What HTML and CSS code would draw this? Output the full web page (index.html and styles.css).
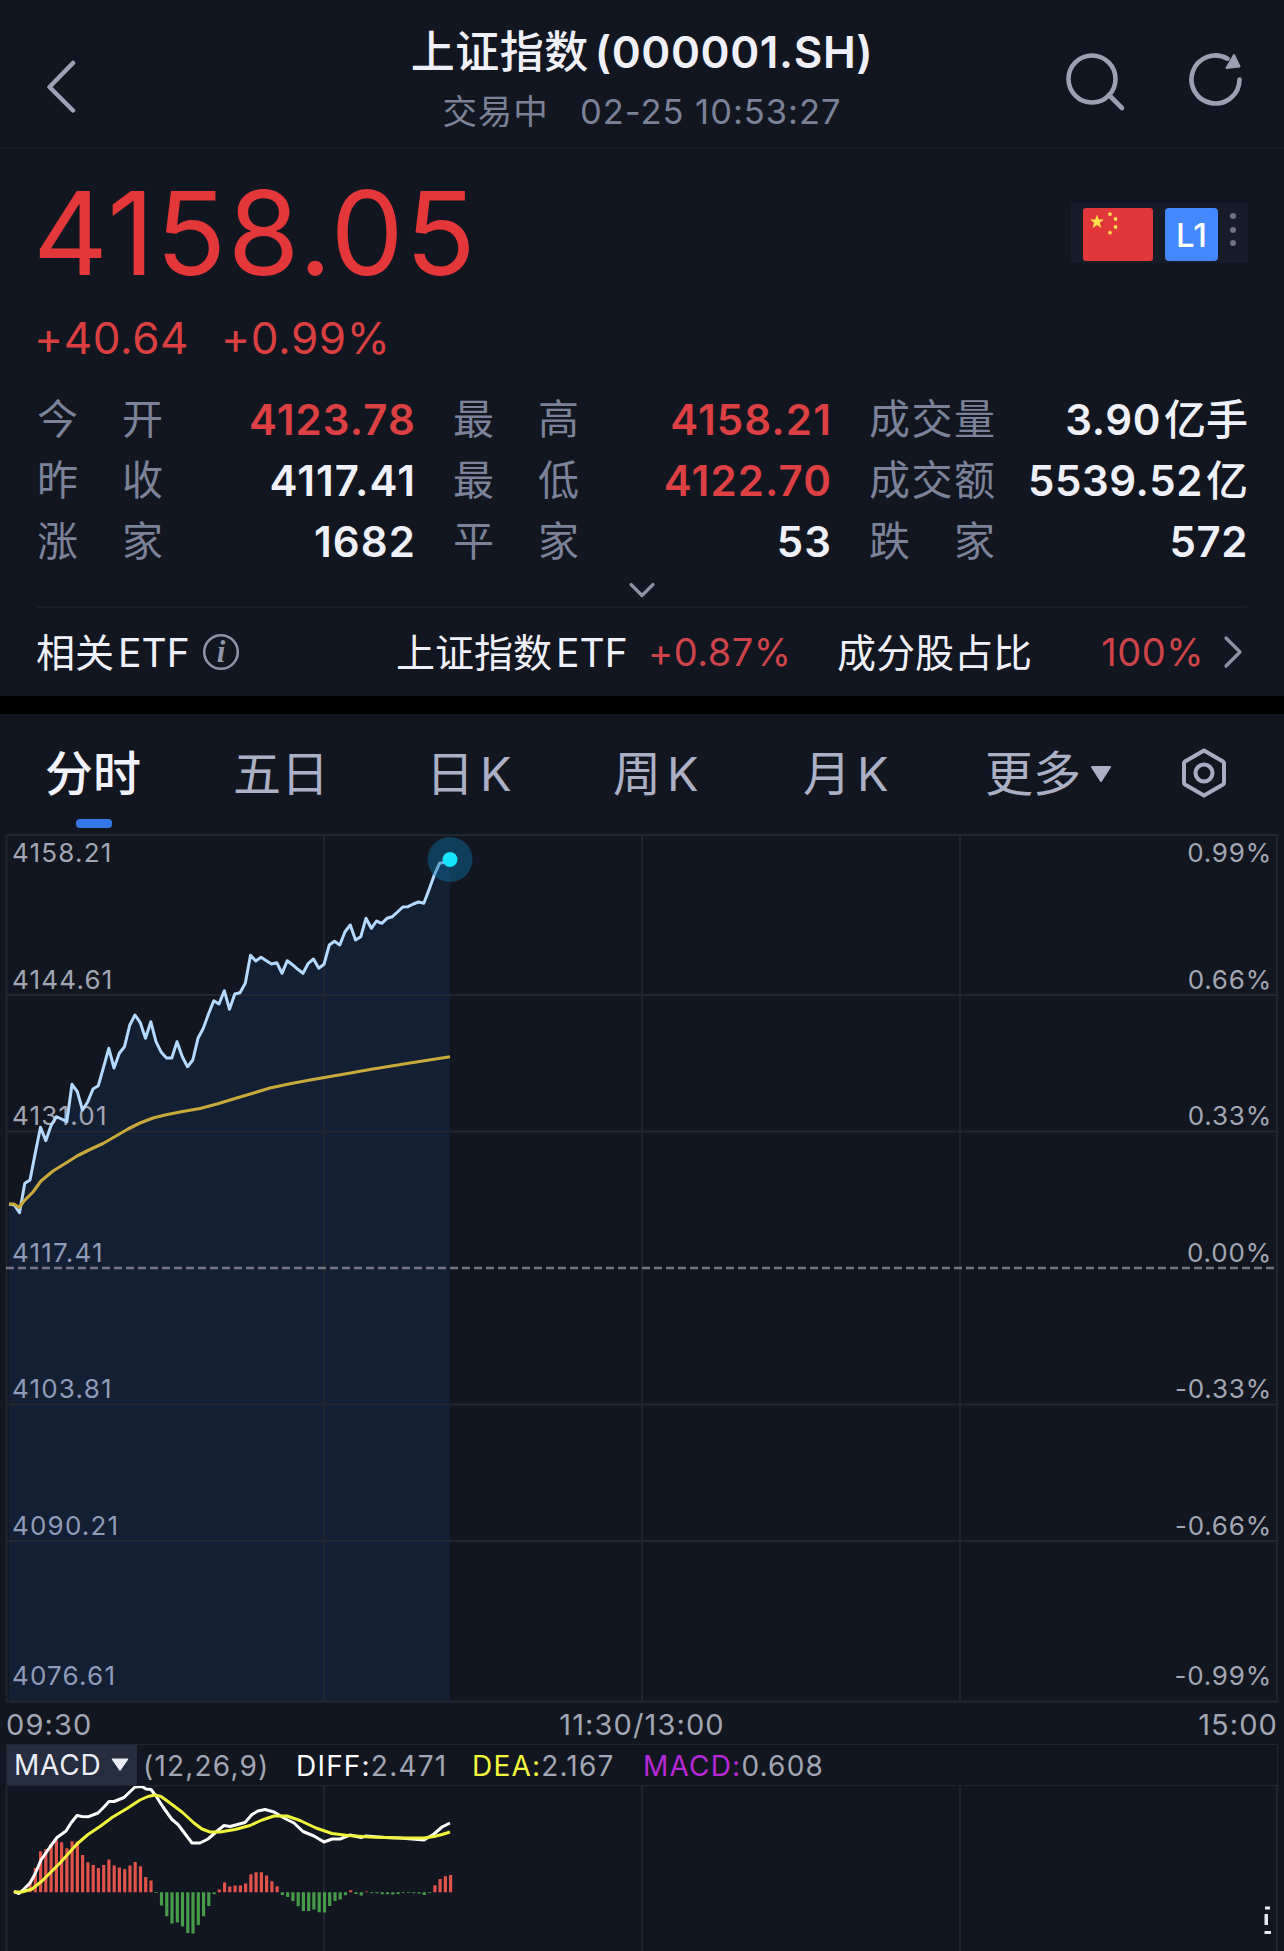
FILE: index.html
```html
<!DOCTYPE html>
<html lang="zh-CN">
<head>
    <meta charset="UTF-8">
    <meta name="viewport" content="width=device-width, initial-scale=1.0">
    <title>上证指数</title>
    <link rel="stylesheet" href="styles.css">
</head>
<body>
    <header class="header">
        <svg class="back" width="32" height="54" viewBox="0 0 32 54"><path d="M27 3L3.500 27L27 50.500"/></svg>
        <div class="title-box">
            <h1 class="title">上证指数<span class="code">(000001.SH)</span></h1>
            <p class="subtitle"><span class="status">交易中</span><span>02-25 10:53:27</span></p>
        </div>
        <div class="header-icons">
            <svg width="62" height="60" viewBox="0 0 62 60"><circle cx="27" cy="27" r="23.500"/><path d="M44 43L57 56"/></svg>
            <svg width="54" height="56" viewBox="0 0 54 56"><path d="M50.500 27.500A24 24 0 1 1 38.500 6.700"/><path class="solid" d="M45 3L50.500 14.500L37.500 16Z"/></svg>
        </div>
    </header>

    <section class="quote">
        <div class="price-row">
            <div class="price">4158.05</div>
            <div class="badges">
                <svg class="flag" width="70" height="53" viewBox="0 0 70 53">
                    <rect width="70" height="53" rx="3"/>
                    <path d="M14 6.500L15.800 11.500H21L16.800 14.700L18.300 20L14 16.900L9.500 20L11.100 14.700L7 11.500H12.200Z"/>
                    <path d="M27 3.500l.8 1.500 1.800.3-1.200 1.200.2 1.700-1.600-.8-1.700.8.300-1.700-1.200-1.200 1.700-.3zM27 22l.8 1.500 1.800.3-1.200 1.200.2 1.700-1.600-.8-1.700.8.300-1.700-1.200-1.200 1.700-.3z"/>
                    <circle cx="32.500" cy="11" r="1.900"/>
                    <circle cx="32.500" cy="19" r="1.900"/>
                </svg>
                <span class="level">L1</span>
                <span class="dots"><i></i><i></i><i></i></span>
            </div>
        </div>
        <div class="change"><span>+40.64</span><span>+0.99%</span></div>

        <div class="stats">
            <div class="stat"><span class="label"><b>今</b><b>开</b></span><span class="value up">4123.78</span></div>
            <div class="stat"><span class="label"><b>最</b><b>高</b></span><span class="value up">4158.21</span></div>
            <div class="stat"><span class="label"><b>成</b><b>交</b><b>量</b></span><span class="value">3.90<em>亿手</em></span></div>
            <div class="stat"><span class="label"><b>昨</b><b>收</b></span><span class="value">4117.41</span></div>
            <div class="stat"><span class="label"><b>最</b><b>低</b></span><span class="value up">4122.70</span></div>
            <div class="stat"><span class="label"><b>成</b><b>交</b><b>额</b></span><span class="value">5539.52<em>亿</em></span></div>
            <div class="stat"><span class="label"><b>涨</b><b>家</b></span><span class="value">1682</span></div>
            <div class="stat"><span class="label"><b>平</b><b>家</b></span><span class="value">53</span></div>
            <div class="stat"><span class="label"><b>跌</b><b>家</b></span><span class="value">572</span></div>
        </div>
        <div class="expand">
            <svg width="28" height="16" viewBox="0 0 28 16"><path d="M3 2.500L14 13.500L25 2.500"/></svg>
        </div>

        <div class="etf">
            <span class="etf-label">相关<span class="latin">ETF</span></span>
            <svg class="info" width="38" height="38" viewBox="0 0 38 38"><circle cx="19" cy="19" r="16.800"/><text x="19" y="29">i</text></svg>
            <span class="etf-name">上证指数<span class="latin">ETF</span></span>
            <span class="etf-pct">+0.87%</span>
            <span class="etf-share">成分股占比</span>
            <span class="etf-full">100%</span>
            <svg class="more" width="20" height="34" viewBox="0 0 20 34"><path d="M3 3L17 17L3 31"/></svg>
        </div>
    </section>

    <nav class="tabs">
        <span class="tab active">分时</span>
        <span class="tab">五日</span>
        <span class="tab">日<span class="k">K</span></span>
        <span class="tab">周<span class="k">K</span></span>
        <span class="tab">月<span class="k">K</span></span>
        <span class="tab tab-more">更多<svg width="22" height="18" viewBox="0 0 22 18"><path d="M2 2H20L11 16Z"/></svg></span>
        <svg class="setting" width="48" height="52" viewBox="0 0 48 52"><path d="M24 3.500L43 14.500Q44 15 44 16.500V35.500Q44 37 43 37.500L24 48.500L5 37.500Q4 37 4 35.500V16.500Q4 15 5 14.500Z"/><circle cx="24" cy="26" r="8.500"/></svg>
    </nav>

    <svg class="chart" width="1284" height="869" viewBox="0 0 1284 869">
        <path class="area" id="area"/>
        <path class="grid" d="M6.500 1H1277V867.500H6.500ZM6.500 161H1277M6.500 297.500H1277M6.500 570.500H1277M6.500 707H1277M324 1V868M642 1V868M960 1V868"/>
        <g class="axis left">
            <text x="12" y="28">4158.21</text>
            <text x="12" y="155">4144.61</text>
            <text x="12" y="291">4131.01</text>
            <text class="shaded" x="12" y="428">4117.41</text>
            <text class="shaded" x="12" y="564">4103.81</text>
            <text class="shaded" x="12" y="701">4090.21</text>
            <text class="shaded" x="12" y="851">4076.61</text>
        </g>
        <g class="axis right">
            <text x="1272" y="28">0.99%</text>
            <text x="1272" y="155">0.66%</text>
            <text x="1272" y="291">0.33%</text>
            <text x="1272" y="428">0.00%</text>
            <text x="1272" y="564">-0.33%</text>
            <text x="1272" y="701">-0.66%</text>
            <text x="1272" y="851">-0.99%</text>
        </g>
        <path class="base" d="M6 434H1277"/>
        <polyline class="price-line" id="priceLine"/>
        <polyline class="avg-line" id="avgLine"/>
        <circle class="halo" cx="450" cy="25.500" r="22.500"/>
        <circle class="dot" cx="450" cy="25.500" r="7.500"/>
    </svg>

    <div class="times"><span>09:30</span><span>11:30/13:00</span><span>15:00</span></div>

    <div class="macd-bar">
        <span class="picker">MACD<svg width="20" height="16" viewBox="0 0 20 16"><path d="M2 2H18L10 13.500Z"/></svg></span>
        <span class="params">(12,26,9)</span>
        <span class="item diff"><b>DIFF:</b>2.471</span>
        <span class="item dea"><b>DEA:</b>2.167</span>
        <span class="item macd"><b>MACD:</b>0.608</span>
    </div>

    <svg class="macd-chart" width="1284" height="165" viewBox="0 0 1284 165">
        <path class="grid" d="M6.500 0V165M324 0V165M642 0V165M960 0V165M1277 0V165"/>
        <path class="bar-up" id="barsUp"/>
        <path class="bar-down" id="barsDown"/>
        <polyline class="diff-line" id="diffLine"/>
        <polyline class="dea-line" id="deaLine"/>
        <path class="mark" d="M1265 120.500H1270V123.500H1265ZM1264.500 128H1268V139H1264.500ZM1264.500 145H1271V148H1264.500Z"/>
    </svg>
    <script src="chart.js"></script>
</body>
</html>
```
FILE: styles.css
```css
* {
    box-sizing: border-box;
}
body {
    margin: 0;
    width: 1284px;
    height: 1951px;
    overflow: hidden;
    background-color: #121620;
    color: #f0f1f8;
    font-family: Inter, "Noto Sans CJK SC", sans-serif;
}
svg {
    display: block;
    fill: none;
}
b, em, i {
    font-weight: inherit;
    font-style: normal;
}

/* header */
.header {
    display: grid;
    grid-template-columns: 400px 1fr 400px;
    height: 149px;
    border-bottom: 2px solid #191d28;
}
.back {
    margin: 60px 0 0 46px;
    stroke: #9ba2b5;
    stroke-width: 4.5;
    stroke-linecap: round;
    stroke-linejoin: round;
}
.title-box {
    display: flex;
    flex-direction: column;
    align-items: center;
    padding-top: 20px;
}
.title {
    margin: 0;
    font-size: 44px;
    line-height: 64px;
    font-weight: 500;
    letter-spacing: 0.5px;
    white-space: nowrap;
}
.code {
    margin-left: 6px;
    font-weight: 600;
    letter-spacing: 0.6px;
}
.subtitle {
    display: flex;
    gap: 31px;
    margin: 0;
    font-size: 34.5px;
    line-height: 56px;
    letter-spacing: 1px;
    color: #7b8198;
    white-space: nowrap;
}
.header-icons {
    display: flex;
    justify-content: flex-end;
    gap: 62px;
    padding: 52px 41px 0 0;
    stroke: #9ba1b3;
    stroke-width: 4.6;
    stroke-linecap: round;
    stroke-linejoin: round;
}
.header-icons .solid {
    fill: #9ba1b3;
    stroke-width: 2;
}

/* quote */
.quote {
    height: 547px;
    padding: 0 37px;
}
.price-row {
    display: flex;
    justify-content: space-between;
    height: 156px;
}
.price {
    margin: 14px 0 0 -4px;
    font-size: 116px;
    line-height: 140px;
    letter-spacing: 1.5px;
    color: #e43739;
}
.badges {
    display: flex;
    align-items: center;
    width: 177px;
    height: 60px;
    margin: 54px -1px 0 0;
    padding: 2px 0 0 12px;
    background-color: #181c28;
}
.flag rect {
    fill: #e1363a;
}
.flag path, .flag circle {
    fill: #ffdf4a;
}
.level {
    width: 53px;
    height: 53px;
    margin-left: 12px;
    border-radius: 4px;
    background-color: #4488ff;
    color: #fff;
    font-size: 33px;
    font-weight: 500;
    line-height: 55px;
    text-align: center;
}
.dots {
    display: flex;
    flex-direction: column;
    gap: 7.5px;
    margin: -9px 0 0 12px;
}
.dots i {
    width: 6px;
    height: 6px;
    border-radius: 50%;
    background-color: #70737f;
}
.change {
    display: flex;
    gap: 32px;
    height: 84px;
    margin-left: -3px;
    font-size: 44px;
    line-height: 66px;
    letter-spacing: 0.6px;
    color: #d9403f;
}
.stats {
    display: grid;
    grid-template-columns: repeat(3, 378px);
    column-gap: 38px;
    grid-auto-rows: 61px;
}
.stat {
    display: flex;
    justify-content: space-between;
    line-height: 61px;
    white-space: nowrap;
}
.label {
    display: flex;
    justify-content: space-between;
    width: 126px;
    font-size: 41px;
    color: #7b8299;
}
.value {
    margin-right: -1px;
    font-size: 42px;
    font-weight: 600;
    letter-spacing: 1.1px;
}
.stat:nth-child(3n) .value {
    letter-spacing: 0.6px;
}
.value em {
    margin-left: 3px;
    font-weight: 500;
    letter-spacing: 0;
}
.up {
    color: #dc4042;
}
.expand {
    display: flex;
    justify-content: center;
    height: 36px;
    padding-top: 10px;
    border-bottom: 2px solid #1a1e29;
}
.expand svg, .more {
    stroke: #8d93a5;
    stroke-width: 3.2;
    stroke-linecap: round;
    stroke-linejoin: round;
}
.etf {
    display: flex;
    align-items: center;
    height: 88px;
    font-size: 38px;
    white-space: nowrap;
}
.latin {
    margin-left: 4px;
}
.etf-label, .etf-name, .etf-share {
    margin-top: -4px;
    font-size: 39px;
}
.etf-label {
    width: 165px;
    margin-left: -1px;
}
.info {
    margin-left: 1px;
}
.info circle {
    stroke: #8d93a5;
    stroke-width: 2.6;
}
.info text {
    fill: #9096a8;
    font-family: "Liberation Serif", serif;
    font-size: 31px;
    font-style: italic;
    font-weight: 700;
    text-anchor: middle;
}
.etf-name {
    width: 252px;
    margin-left: 156px;
}
.etf-pct {
    width: 189px;
    letter-spacing: 0.5px;
    color: #cf4448;
}
.etf-full {
    flex: 1;
    margin-right: 19px;
    text-align: right;
    letter-spacing: 0.5px;
    color: #cf4448;
}
.more {
    margin-right: 4px;
}

/* tabs */
.tabs {
    display: flex;
    align-items: flex-start;
    height: 138px;
    padding-left: 45px;
    border-top: 18px solid #000;
    font-size: 48px;
    line-height: 120px;
    color: #abb0c6;
    white-space: nowrap;
}
.tab {
    width: 188px;
}
.tab:nth-child(2) {
    width: 193px;
}
.tab:nth-child(3) {
    width: 187px;
}
.tab:nth-child(4) {
    width: 190px;
}
.tab:nth-child(5) {
    width: 182px;
}
.k {
    margin-left: 6px;
    font-size: 47px;
}
.active {
    position: relative;
    color: #f2f3fa;
    font-weight: 500;
}
.active::after {
    content: "";
    position: absolute;
    left: 31px;
    top: 105px;
    width: 36px;
    height: 9px;
    border-radius: 4px;
    background-color: #3577e6;
}
.tab.tab-more {
    display: flex;
    align-items: center;
    gap: 9px;
    width: 195px;
}
.tab-more svg {
    fill: #abb0c6;
    stroke: #abb0c6;
    stroke-width: 2;
    stroke-linejoin: round;
}
.setting {
    margin-top: 33px;
    stroke: #a6acc2;
    stroke-width: 4;
    stroke-linejoin: round;
}

/* time chart */
.grid {
    stroke: #222631;
    stroke-width: 1.8;
}
.axis {
    fill: #a2a6b4;
    font-size: 26px;
}
.left {
    letter-spacing: 1.2px;
}
.right {
    letter-spacing: 0.8px;
    text-anchor: end;
}
.axis .shaded {
    fill: #8f9cb8;
}
.base {
    stroke: #747783;
    stroke-width: 2.6;
    stroke-dasharray: 8 4;
}
.area {
    fill: rgba(26, 70, 128, 0.2);
}
.price-line {
    stroke: #b4daff;
    stroke-width: 3;
    stroke-linejoin: round;
}
.avg-line {
    stroke: #c9a93c;
    stroke-width: 3.1;
    stroke-linejoin: round;
}
.halo {
    fill: rgba(13, 110, 165, 0.45);
}
.dot {
    fill: #16e4fa;
}
.times {
    display: grid;
    grid-template-columns: 1fr 1fr 1fr;
    height: 41px;
    padding: 0 6px;
    font-size: 29px;
    line-height: 44px;
    letter-spacing: 1.1px;
    color: #a2a6b4;
}
.times span:nth-child(2) {
    text-align: center;
}
.times span:nth-child(3) {
    text-align: right;
}

/* macd */
.macd-bar {
    display: flex;
    height: 42px;
    margin: 0 6px;
    border: 1px solid #222631;
    font-size: 28px;
    line-height: 42px;
    letter-spacing: 1.2px;
    color: #a2a6b4;
    white-space: nowrap;
}
.picker {
    display: flex;
    align-items: center;
    justify-content: space-between;
    width: 130px;
    padding: 0 7px;
    background-color: #262d40;
    color: #eceef6;
    letter-spacing: 0.8px;
}
.picker svg {
    fill: #eceef6;
    stroke: #eceef6;
    stroke-linejoin: round;
}
.params {
    width: 159px;
    padding-left: 6px;
}
.diff {
    width: 176px;
}
.dea {
    width: 171px;
}
.diff b {
    color: #fff;
}
.dea b {
    color: #f4f83c;
}
.macd b {
    color: #b728d8;
}
.bar-up, .bar-down {
    stroke: #e0524a;
    stroke-width: 3.2;
}
.bar-down {
    stroke: #479c49;
}
.diff-line, .dea-line {
    stroke: #fff;
    stroke-width: 3;
    stroke-linejoin: round;
}
.dea-line {
    stroke: #f0f43a;
}
.mark {
    fill: #e8e9ee;
}
```
FILE: chart.js
```js
// one value per minute from 09:30, in px from the top of the chart
const price = [370, 371, 378.7, 349.3, 346, 319, 293.3, 306.7, 291.7, 282.7, 285, 287.7, 250.3, 257.7, 276, 267.7, 255, 251.7,
    233.3, 214.3, 234, 219.3, 212.7, 191, 181, 188.7, 204.3, 187.7, 207.7, 218.3, 224, 224, 207.7, 222.7, 232.7, 226, 204.3, 194.3,
    180, 166.7, 170, 156.7, 175.3, 160, 158.7, 149.3, 121.3, 127, 123.3, 126.7, 130, 128.7, 139.3, 126.7, 130.7, 135.3, 139.3,
    129.3, 125, 134.3, 130.3, 111, 107.3, 111, 97.7, 91, 106, 102.7, 84.3, 94.3, 87, 89.3, 84.3, 82.7, 78, 73, 72.7, 70, 68,
    69.3, 55.7, 41, 29.3, 28.3, 25.5];

const avg = [[9, 370], [14, 370], [19, 373.5], [24, 367], [33, 358], [41, 347], [53, 337], [66, 329], [77, 322], [90, 315.500],
    [103, 309.500], [116, 302], [128, 295], [140, 289], [153, 284], [165, 281], [180, 278], [200, 274.500], [217, 270], [235, 264.500],
    [252, 259.500], [270, 254], [290, 249.700], [310, 246], [342, 240.500], [370, 235.500], [410, 229], [450, 222.700]];

const macd = [1, -1, 3, 10, 24.3, 41, 43.3, 48.3, 51.7, 50, 44, 51, 50.7, 37.3, 30, 27.3, 24.3, 27.3, 32.7, 26.7, 24.7, 23.3, 26.7,
    30.3, 26, 15.3, 11.7, -0.7, -13.3, -24, -31.3, -30.3, -34.3, -40.7, -41.3, -32.7, -24, -13.7, -2, 2.7, 9.7, 5.7, 6.7, 6.7, 8.7,
    18, 20, 20, 16.7, 11, 6, -2.7, -4.7, -8.7, -14, -18.7, -18.7, -17.3, -20, -20.3, -13.7, -8.7, -7.3, -3, 2, -1.7, -3.3, 0.8, -1,
    -1, -2, -2, -2.3, -1.7, -0.7, -0.7, -1, -1.3, -2.7, -0.7, 7, 13.3, 16, 17.3];

const diff = [[14, 105.5], [19, 107.5], [24, 103], [30, 97], [35, 88], [41, 74], [50, 61], [57, 51.5], [66, 45], [71, 37], [77, 29.5],
    [82, 30.5], [88, 30.800], [98, 27], [104, 21], [109, 15.500], [114, 15.500], [124, 11.500], [135, 1], [142, 0.500], [146, 3],
    [151, 3.500], [156, 10], [163, 21], [172, 33.500], [178, 38.500], [192, 57], [200, 57], [208, 53], [216, 46], [224, 39.500], [230, 40.500],
    [245, 36.500], [252, 28.500], [258, 25], [265, 23.500], [274, 26], [284, 32], [294, 37], [303, 45.500], [314, 50], [324, 56],
    [332, 53], [340, 53], [350, 49], [361, 51.500], [366, 50], [385, 51.500], [400, 52], [424, 54], [434, 48], [442, 41], [450, 37]];

const dea = [[14, 106], [22, 106], [32, 103], [42, 95], [60, 77], [77, 58], [88, 48.500], [100, 40.500], [112, 31.500], [127, 22.500],
    [140, 14], [148, 10.500], [155, 9], [161, 10.500], [170, 17], [182, 26], [194, 37], [202, 43], [210, 46], [220, 46], [235, 43.500],
    [250, 39.500], [262, 34], [274, 30], [287, 30], [300, 34.500], [316, 42], [332, 47.500], [348, 49.500], [370, 51], [400, 52], [424, 52],
    [434, 50.500], [442, 48.500], [450, 46]];

const zero = 106.3;
const linePoints = price.map((y, i) => (9 + i * 5.25).toFixed(1) + "," + y).join(" ");

document.getElementById("priceLine").setAttribute("points", linePoints);
document.getElementById("area").setAttribute("d", "M9 868L" + linePoints + "V868Z");
document.getElementById("avgLine").setAttribute("points", avg.join(" "));
document.getElementById("diffLine").setAttribute("points", diff.join(" "));
document.getElementById("deaLine").setAttribute("points", dea.join(" "));

let up = "";
let down = "";
macd.forEach((v, i) => {
    const seg = "M" + (14.3 + i * 5.257).toFixed(1) + " " + zero + "V" + (zero - v).toFixed(1);
    if (v > 0) {
        up += seg;
    } else {
        down += seg;
    }
});
document.getElementById("barsUp").setAttribute("d", up);
document.getElementById("barsDown").setAttribute("d", down);
```
